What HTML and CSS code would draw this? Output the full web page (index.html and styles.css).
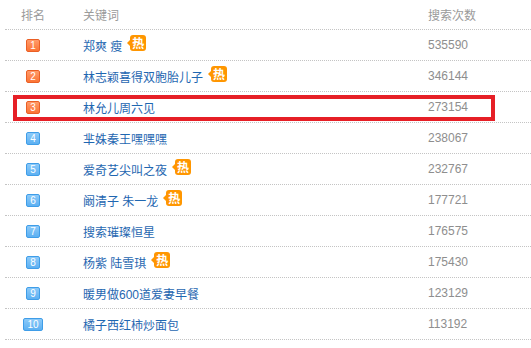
FILE: index.html
```html
<!DOCTYPE html>
<html lang="zh-CN">
<head>
<meta charset="utf-8">
<title>搜索排行</title>
<link rel="stylesheet" href="styles.css">
</head>
<body>
<div class="board">
  <div class="row head">
    <div class="c-rank">排名</div>
    <div class="c-kw">关键词</div>
    <div class="c-num">搜索次数</div>
  </div>
  <div class="row"><div class="c-rank"><span class="rk top">1</span></div><div class="c-kw"><a class="kw">郑爽 瘦</a><span class="hot">热</span></div><div class="c-num">535590</div></div>
  <div class="row"><div class="c-rank"><span class="rk top">2</span></div><div class="c-kw"><a class="kw">林志颖喜得双胞胎儿子</a><span class="hot">热</span></div><div class="c-num">346144</div></div>
  <div class="row marked"><div class="c-rank"><span class="rk top">3</span></div><div class="c-kw"><a class="kw">林允儿周六见</a></div><div class="c-num">273154</div><div class="mark"></div></div>
  <div class="row"><div class="c-rank"><span class="rk">4</span></div><div class="c-kw"><a class="kw">芈姝秦王嘿嘿嘿</a></div><div class="c-num">238067</div></div>
  <div class="row"><div class="c-rank"><span class="rk">5</span></div><div class="c-kw"><a class="kw">爱奇艺尖叫之夜</a><span class="hot">热</span></div><div class="c-num">232767</div></div>
  <div class="row"><div class="c-rank"><span class="rk">6</span></div><div class="c-kw"><a class="kw">阚清子 朱一龙</a><span class="hot">热</span></div><div class="c-num">177721</div></div>
  <div class="row"><div class="c-rank"><span class="rk">7</span></div><div class="c-kw"><a class="kw">搜索璀璨恒星</a></div><div class="c-num">176575</div></div>
  <div class="row"><div class="c-rank"><span class="rk">8</span></div><div class="c-kw"><a class="kw">杨紫 陆雪琪</a><span class="hot">热</span></div><div class="c-num">175430</div></div>
  <div class="row"><div class="c-rank"><span class="rk">9</span></div><div class="c-kw"><a class="kw">暖男做600道爱妻早餐</a></div><div class="c-num">123129</div></div>
  <div class="row"><div class="c-rank"><span class="rk">10</span></div><div class="c-kw"><a class="kw">橘子西红柿炒面包</a></div><div class="c-num">113192</div></div>
</div>
</body>
</html>
```
FILE: styles.css
```css
html, body {
  margin: 0;
  padding: 0;
  background: #fff;
}
body {
  font-family: "Liberation Sans", "Noto Sans CJK SC", sans-serif;
  font-size: 12px;
}
.board {
  padding-left: 5px;
}
.row {
  position: relative;
  display: flex;
  align-items: center;
  height: 30px;
  border-bottom: 1px dotted #c4c4c4;
}
.row.head {
  height: 29px;
  color: #9a9a9a;
}
.c-rank {
  width: 56px;
  display: flex;
  justify-content: center;
}
.c-kw {
  width: 345px;
  margin-left: 22px;
  display: flex;
  align-items: center;
}
.c-num {
  color: #8e8e8e;
}
.head .c-num {
  color: #9a9a9a;
}
.kw {
  color: #1f67b1;
  text-decoration: none;
}
.rk {
  box-sizing: border-box;
  min-width: 13px;
  height: 13px;
  padding: 0 3px;
  border: 1px solid #3f9de8;
  border-radius: 2px;
  background: linear-gradient(#8ccaf9, #5cb0f2);
  color: #fff;
  font-size: 10px;
  line-height: 11px;
  text-align: center;
}
.rk.top {
  border-color: #ea5f25;
  background: linear-gradient(#ff9a6a, #fb7435);
}
.hot {
  position: relative;
  width: 16px;
  height: 16px;
  margin-left: 8px;
  margin-bottom: 4px;
  border-radius: 3px;
  background: #ff9600;
  color: #fff;
  font-size: 12px;
  font-weight: bold;
  line-height: 16px;
  text-align: center;
  font-family: "Noto Sans CJK SC", sans-serif;
}
.hot::before {
  content: "";
  position: absolute;
  left: -3px;
  top: 5px;
  border-style: solid;
  border-width: 3px 3px 3px 0;
  border-color: transparent #ff9600 transparent transparent;
}
.mark {
  position: absolute;
  left: 8px;
  top: 3px;
  width: 482px;
  height: 26px;
  box-sizing: border-box;
  border: 4px solid #e61f26;
  pointer-events: none;
}
```
